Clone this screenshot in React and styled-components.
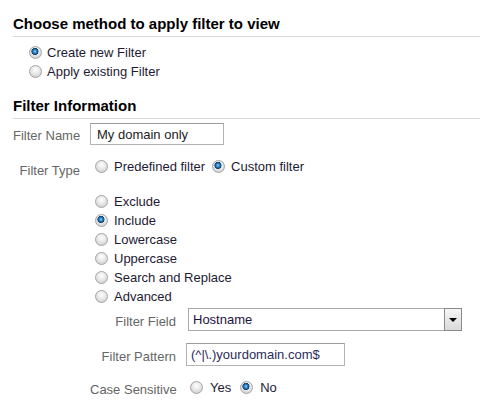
import React from "react";
import styled, { createGlobalStyle } from "styled-components";

const Global = createGlobalStyle`
  html, body { margin: 0; padding: 0; background: #fff; }
  body { font-family: "Liberation Sans", Arial, sans-serif; }
`;

const Page = styled.div`
  padding: 0 0 0 13px;
  font-family: "Liberation Sans", Arial, sans-serif;
`;

const Heading = styled.h2`
  margin: ${(p) => p.$top}px 0 0;
  padding: 0 0 3px;
  font-size: 15px;
  line-height: 18px;
  font-weight: bold;
  color: #000;
  border-bottom: 1px solid #dadada;
`;

const RadioList = styled.div`
  display: flex;
  flex-direction: column;
  margin-top: ${(p) => p.$top || 0}px;
  padding-left: ${(p) => p.$indent || 0}px;
`;

const InlineGroup = styled.div`
  display: flex;
  align-items: center;
  height: 19px;
  gap: ${(p) => p.$gap}px;
  padding-left: ${(p) => p.$indent || 0}px;
`;

const Option = styled.label`
  display: flex;
  align-items: center;
  gap: ${(p) => p.$gap || 5}px;
  height: 19px;
  font-size: 13px;
  line-height: 19px;
  color: #1e1a33;
  white-space: nowrap;
`;

const Radio = styled.input.attrs({ type: "radio" })`
  appearance: none;
  -webkit-appearance: none;
  flex: none;
  width: 13px;
  height: 13px;
  margin: 0;
  box-sizing: border-box;
  border-radius: 50%;
  border: 1px solid #a4a4a4;
  background: radial-gradient(circle at 50% 35%, #ffffff 0%, #e8e8e8 45%, #c6c6c6 100%);
  &:checked {
    background:
      radial-gradient(circle at 45% 40%, #9ad6fa 0, #2f8bcc 1.5px, #0d4070 3.3px, rgba(255,255,255,0) 3.8px),
      radial-gradient(circle at 50% 35%, #ffffff 0%, #e8e8e8 45%, #c6c6c6 100%);
  }
`;

const FormGrid = styled.div`
  display: grid;
  grid-template-columns: ${(p) => p.$label}px 1fr;
  column-gap: 10px;
  row-gap: 12px;
  align-items: start;
  margin-top: ${(p) => p.$top || 0}px;
`;

const FieldLabel = styled.div`
  text-align: right;
  color: #666;
  font-size: 13px;
  line-height: 16px;
  padding-top: ${(p) => p.$pad}px;
  white-space: nowrap;
`;

const Cell = styled.div`
  grid-column: 2;
  display: flex;
  flex-direction: column;
`;

const TextInput = styled.input`
  box-sizing: border-box;
  width: ${(p) => p.$w}px;
  height: ${(p) => p.$h}px;
  margin: 0;
  padding: 0 ${(p) => p.$pad}px;
  border: 1px solid #b3b3b3;
  border-top-color: #9c9c9c;
  font-family: "Liberation Sans", Arial, sans-serif;
  font-size: 13px;
  color: ${(p) => p.$color || "#222"};
  background: #fff;
  outline: none;
`;

const SelectBox = styled.div`
  box-sizing: border-box;
  width: 274px;
  height: 23px;
  margin-left: 2px;
  display: flex;
  align-items: stretch;
  border: 1px solid #a9a9a9;
  background: #fff;
`;

const SelectValue = styled.div`
  flex: 1;
  padding-left: 4px;
  font-size: 13px;
  line-height: 21px;
  color: #1e1240;
`;

const SelectButton = styled.div`
  box-sizing: border-box;
  flex: none;
  width: 18px;
  margin: -1px -1px -1px 0;
  border: 1px solid #8a8a8a;
  background: linear-gradient(#f6f6f6, #dadada);
  display: flex;
  align-items: center;
  justify-content: center;
`;

const Caret = styled.span`
  width: 0;
  height: 0;
  border-left: 4px solid transparent;
  border-right: 4px solid transparent;
  border-top: 4px solid #000;
  margin-top: 1px;
`;

export default function App() {
  const types = ["Exclude", "Include", "Lowercase", "Uppercase", "Search and Replace", "Advanced"];
  return (
    <>
      <Global />
      <Page>
        <Heading $top={15}>Choose method to apply filter to view</Heading>
        <RadioList $top={6} $indent={16}>
          <Option>
            <Radio name="method" defaultChecked />
            Create new Filter
          </Option>
          <Option>
            <Radio name="method" />
            Apply existing Filter
          </Option>
        </RadioList>

        <Heading $top={16}>Filter Information</Heading>
        <FormGrid $label={67} $top={4}>
          <FieldLabel $pad={5}>Filter Name</FieldLabel>
          <TextInput $w={134} $h={22} $pad={6} defaultValue="My domain only" />

          <FieldLabel $pad={6}>Filter Type</FieldLabel>
          <InlineGroup $gap={7} $indent={5}>
            <Option $gap={6}>
              <Radio name="ftype" />
              Predefined filter
            </Option>
            <Option $gap={6}>
              <Radio name="ftype" defaultChecked />
              Custom filter
            </Option>
          </InlineGroup>

          <Cell>
            <RadioList $top={1} $indent={5}>
              {types.map((t) => (
                <Option key={t} $gap={6}>
                  <Radio name="custom" defaultChecked={t === "Include"} />
                  {t}
                </Option>
              ))}
            </RadioList>

            <FormGrid $label={86} $top={2}>
              <FieldLabel $pad={6}>Filter Field</FieldLabel>
              <SelectBox>
                <SelectValue>Hostname</SelectValue>
                <SelectButton>
                  <Caret />
                </SelectButton>
              </SelectBox>

              <FieldLabel $pad={6}>Filter Pattern</FieldLabel>
              <TextInput
                $w={159}
                $h={23}
                $pad={4}
                $color="#2c2c5c"
                defaultValue="(^|\.)yourdomain.com$"
              />

              <FieldLabel $pad={4}>Case Sensitive</FieldLabel>
              <InlineGroup $gap={9} $indent={4}>
                <Option $gap={7}>
                  <Radio name="case" />
                  Yes
                </Option>
                <Option $gap={7}>
                  <Radio name="case" defaultChecked />
                  No
                </Option>
              </InlineGroup>
            </FormGrid>
          </Cell>
        </FormGrid>
      </Page>
    </>
  );
}
